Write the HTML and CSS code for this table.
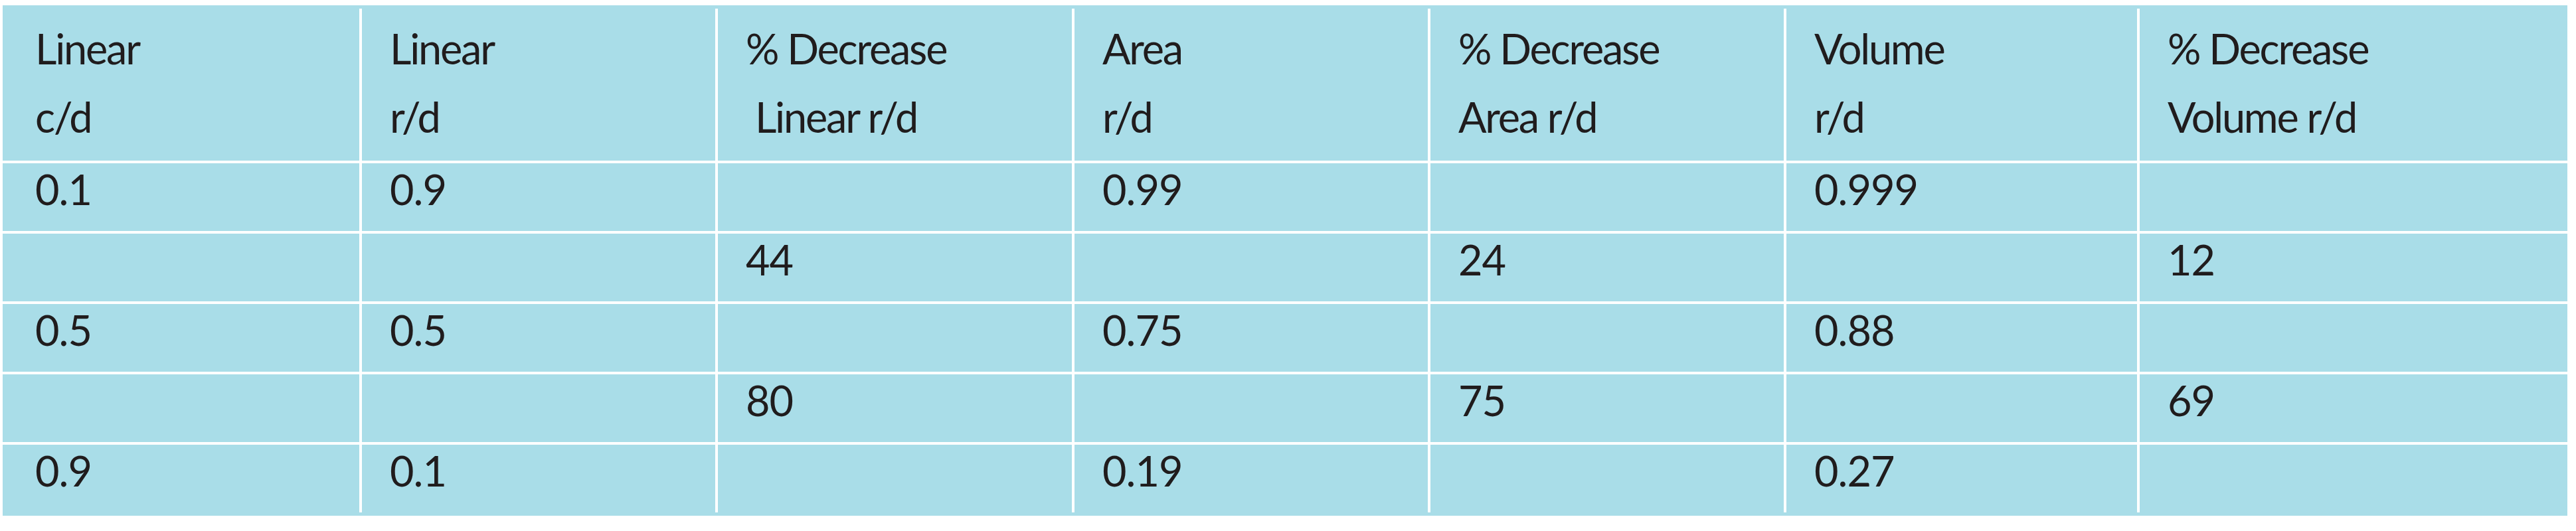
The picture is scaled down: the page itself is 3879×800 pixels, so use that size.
FILE: index.html
```html
<!DOCTYPE html>
<html>
<head>
<meta charset="utf-8">
<title>Decrease table</title>
<link rel="stylesheet" href="styles.css">
</head>
<body>
<div class="table">
  <div class="row head">
    <div class="cell first">Linear<br>c/d</div>
    <div class="cell">Linear<br>r/d</div>
    <div class="cell">% Decrease<br>&nbsp;Linear r/d</div>
    <div class="cell">Area<br>r/d</div>
    <div class="cell">% Decrease<br>Area r/d</div>
    <div class="cell">Volume<br>r/d</div>
    <div class="cell last">% Decrease<br>Volume r/d</div>
  </div>
  <div class="row">
    <div class="cell first">0.1</div>
    <div class="cell">0.9</div>
    <div class="cell"></div>
    <div class="cell">0.99</div>
    <div class="cell"></div>
    <div class="cell">0.999</div>
    <div class="cell last"></div>
  </div>
  <div class="row">
    <div class="cell first"></div>
    <div class="cell"></div>
    <div class="cell">44</div>
    <div class="cell"></div>
    <div class="cell">24</div>
    <div class="cell"></div>
    <div class="cell last">12</div>
  </div>
  <div class="row">
    <div class="cell first">0.5</div>
    <div class="cell">0.5</div>
    <div class="cell"></div>
    <div class="cell">0.75</div>
    <div class="cell"></div>
    <div class="cell">0.88</div>
    <div class="cell last"></div>
  </div>
  <div class="row">
    <div class="cell first"></div>
    <div class="cell"></div>
    <div class="cell">80</div>
    <div class="cell"></div>
    <div class="cell">75</div>
    <div class="cell"></div>
    <div class="cell last">69</div>
  </div>
  <div class="row end">
    <div class="cell first">0.9</div>
    <div class="cell">0.1</div>
    <div class="cell"></div>
    <div class="cell">0.19</div>
    <div class="cell"></div>
    <div class="cell">0.27</div>
    <div class="cell last"></div>
  </div>
</div>
</body>
</html>
```
FILE: styles.css
```css
html, body {
  background: #ffffff;
}
body {
  margin: 8px 0 0 4px;
  font-family: Lato, "Liberation Sans", sans-serif;
  font-size: 63px;
  color: #201c1d;
}
.table {
  width: 3862px;
  background: #a9dde8;
  padding: 5px 0;
}
.row {
  display: grid;
  grid-template-columns: 541px 536px 537px 536px 536px 532px 644px;
  border-bottom: 4px solid #ffffff;
}
.row.end {
  border-bottom: none;
}
.cell {
  box-sizing: border-box;
  height: 102px;
  padding: 7px 0 0 42px;
  line-height: 64px;
  letter-spacing: -1px;
  border-right: 4px solid #ffffff;
  white-space: nowrap;
}
.cell.first {
  padding-left: 49px;
}
.cell.last {
  border-right: none;
}
.head .cell {
  height: 229px;
  padding-top: 8px;
  line-height: 103px;
  letter-spacing: -2.2px;
}
```
